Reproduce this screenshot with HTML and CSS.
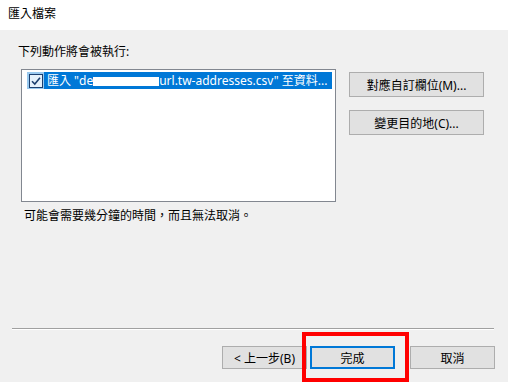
FILE: index.html
```html
<!DOCTYPE html>
<html lang="zh-Hant">
<head>
    <meta charset="UTF-8">
    <title>匯入檔案</title>
    <link rel="stylesheet" href="styles.css">
</head>
<body>
    <div class="header">匯入檔案</div>

    <div class="main">
        <div class="caption">下列動作將會被執行:</div>
        <div class="row">
            <div class="listbox">
                <div class="item">
                    <span class="check">
                        <svg width="14" height="14" viewBox="0 0 14 14">
                            <rect x="0.5" y="0.5" width="13" height="13" fill="#e5f1fb" stroke="#1c3f6e"/>
                            <path d="M3 7.2 L5.8 10 L11 3.8" fill="none" stroke="#1c3f6e" stroke-width="1.6"/>
                        </svg>
                    </span>
                    <span class="label">匯入 "de<span class="redact"></span>url.tw-addresses.csv" 至資料...</span>
                </div>
            </div>
            <div class="side">
                <button class="btn wide">對應自訂欄位(M)...</button>
                <button class="btn wide">變更目的地(C)...</button>
            </div>
        </div>
        <div class="note">可能會需要幾分鐘的時間，而且無法取消。</div>
    </div>

    <div class="footer">
        <div class="sep"></div>
        <div class="buttons">
            <button class="btn">&lt; 上一步(B)</button>
            <div class="marked">
                <button class="btn primary">完成</button>
                <div class="highlight"></div>
            </div>
            <button class="btn cancel">取消</button>
        </div>
    </div>
</body>
</html>
```

FILE: styles.css
```css
body {
    margin: 0;
    width: 508px;
    height: 382px;
    background: #f0f0f0;
    font-family: "Noto Sans", "Noto Sans CJK TC", sans-serif;
    font-size: 12px;
    color: #000000;
    display: flex;
    flex-direction: column;
    overflow: hidden;
}
.header {
    height: 30px;
    line-height: 28px;
    background: #ffffff;
    padding-left: 8px;
}
.main {
    padding: 14px 0 0 18px;
    height: 284px;
}
.caption {
    line-height: 16px;
    height: 16px;
}
.row {
    display: flex;
    margin-top: 9px;
    margin-left: 3px;
}
.listbox {
    width: 313px;
    height: 131px;
    background: #ffffff;
    border: 1px solid #828790;
    padding: 0;
}
.item {
    display: flex;
    align-items: center;
    margin: 2px 3px 0 5px;
    height: 17px;
}
.check {
    width: 17px;
    height: 17px;
    background: #99c9ef;
    display: flex;
    align-items: center;
    justify-content: center;
}
.label {
    flex: 1;
    height: 17px;
    line-height: 17px;
    background: #0078d7;
    color: #ffffff;
    padding-left: 3px;
    white-space: nowrap;
    overflow: hidden;
}
.redact {
    display: inline-block;
    width: 66px;
    height: 9px;
    background: #ffffff;
    vertical-align: -1px;
}
.side {
    display: flex;
    flex-direction: column;
    gap: 13px;
    margin-left: 13px;
    padding-top: 3px;
}
.btn {
    font-family: inherit;
    font-size: 12px;
    background: #e1e1e1;
    border: 1px solid #adadad;
    color: #000000;
    height: 23px;
    width: 85px;
    padding: 0;
    margin: 0;
}
.btn.wide {
    width: 135px;
    height: 25px;
}
.note {
    margin-top: 6px;
    margin-left: 6px;
    line-height: 16px;
}
.footer {
    flex: 1;
}
.sep {
    margin-left: 12px;
    width: 482px;
    height: 1px;
    background: #a0a0a0;
    border-bottom: 1px solid #ffffff;
}
.buttons {
    display: flex;
    margin-top: 16px;
    margin-left: 222px;
}
.marked {
    position: relative;
    margin-left: 3px;
}
.btn.primary {
    border: 2px solid #0078d7;
}
.highlight {
    position: absolute;
    left: -8px;
    top: -14px;
    width: 99px;
    height: 42px;
    border: 4px solid #ff0000;
}
.btn.cancel {
    margin-left: 15px;
}
```
